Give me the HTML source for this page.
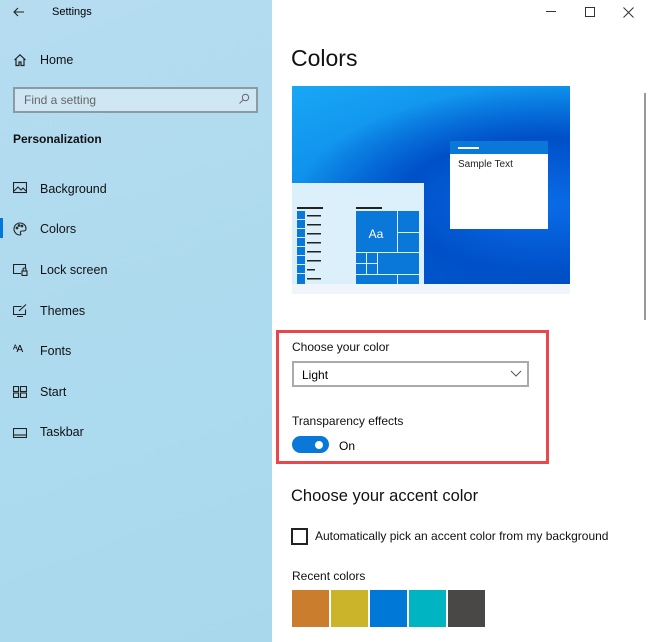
<!DOCTYPE html>
<html><head><style>
*{margin:0;padding:0;box-sizing:border-box}
body{width:648px;height:642px;overflow:hidden;font-family:"Liberation Sans",sans-serif;background:#fff;position:relative;color:#000}
.a{position:absolute}
#side{left:0;top:0;width:272px;height:642px;background:linear-gradient(160deg,#b6dcf0,#acdaee 60%,#a9d8ec)}
.nav{position:absolute;left:40px;font-size:12.5px;color:#111}
.ic{position:absolute;left:13px}
.sw{position:absolute;top:590px;width:37px;height:37px}
</style></head><body>
<div id="side" class="a">
 <svg class="a" style="left:13px;top:7px" width="12" height="10" viewBox="0 0 12 10" fill="none" stroke="#222" stroke-width="1.1"><path d="M11 5H1M5 1L1 5l4 4"/></svg>
 <div class="a" style="left:52px;top:6px;font-size:11px">Settings</div>
 <svg class="ic" style="top:53px" width="14" height="14" viewBox="0 0 14 14" fill="none" stroke="#222" stroke-width="1.2"><path d="M1.5 7L7 1.8 12.5 7M3 5.8V12.5h3V9h2v3.5h3V5.8"/></svg>
 <div class="nav" style="top:53px">Home</div>
 <div class="a" style="left:13px;top:87px;width:245px;height:26px;border:2px solid #8a9ba4;background:#cfe7f3"></div>
 <div class="a" style="left:24px;top:93px;font-size:12px;color:#666">Find a setting</div>
 <svg class="a" style="left:238px;top:93px" width="12" height="12" viewBox="0 0 12 12" fill="none" stroke="#666" stroke-width="1"><circle cx="7.5" cy="4.5" r="3.2"/><path d="M5.2 6.8L1.5 10.5"/></svg>
 <div class="a" style="left:13px;top:132px;font-size:12px;font-weight:bold;color:#111">Personalization</div>
 <svg class="ic" style="top:182px" width="14" height="12" viewBox="0 0 14 12" fill="none" stroke="#222" stroke-width="1.1"><rect x="0.5" y="0.5" width="13" height="10"/><path d="M1 9l4-4 3 3 2-2 3 3"/></svg>
 <div class="nav" style="top:182px">Background</div>
 <div class="a" style="left:0;top:218px;width:3px;height:20px;background:#0078d7"></div>
 <svg class="ic" style="top:222px" width="14" height="14" viewBox="0 0 14 14" fill="none" stroke="#222" stroke-width="1.1"><path d="M7 1a6 6 0 1 0 0 12c1 0 1-1 .5-2s0-2 1.5-2h2a2.5 2.5 0 0 0 2-2.5C13 3.5 10.5 1 7 1z"/><circle cx="4" cy="6" r=".8"/><circle cx="6" cy="3.5" r=".8"/><circle cx="9" cy="4" r=".8"/></svg>
 <div class="nav" style="top:222px">Colors</div>
 <svg class="ic" style="top:264px" width="15" height="12" viewBox="0 0 15 12" fill="none" stroke="#222" stroke-width="1.1"><path d="M8 9.5H.5V.5h12v4"/><rect x="9" y="7" width="5" height="4.5"/><path d="M10 7V5.5a1.5 1.5 0 0 1 3 0V7"/></svg>
 <div class="nav" style="top:263px">Lock screen</div>
 <svg class="ic" style="top:304px" width="15" height="13" viewBox="0 0 15 13" fill="none" stroke="#222" stroke-width="1.1"><path d="M.5 2.5h8M.5 2.5v8h12v-5M4 12.5h6M6 7l7-6.5"/></svg>
 <div class="nav" style="top:304px">Themes</div>
 <div class="a" style="left:13px;top:344px;font-size:10px;letter-spacing:-1px">ᴬA</div>
 <div class="nav" style="top:344px">Fonts</div>
 <svg class="ic" style="top:386px" width="14" height="12" viewBox="0 0 14 12" fill="none" stroke="#222" stroke-width="1.1"><rect x=".5" y=".5" width="5" height="5"/><rect x="7.5" y=".5" width="6" height="5"/><rect x=".5" y="7" width="5" height="4.5"/><rect x="7.5" y="7" width="6" height="4.5"/></svg>
 <div class="nav" style="top:385px">Start</div>
 <svg class="ic" style="top:428px" width="14" height="10" viewBox="0 0 14 10" fill="none" stroke="#222" stroke-width="1.1"><rect x=".5" y=".5" width="13" height="9"/><path d="M.5 7h13"/></svg>
 <div class="nav" style="top:425px">Taskbar</div>
</div>
<div class="a" style="left:546px;top:11px;width:10px;height:1px;background:#333"></div>
<div class="a" style="left:585px;top:7px;width:10px;height:10px;border:1px solid #333"></div>
<svg class="a" style="left:623px;top:7px" width="11" height="11" fill="none" stroke="#333" stroke-width="1"><path d="M.5.5l10 10M10.5.5l-10 10"/></svg>
<div class="a" style="left:291px;top:45px;font-size:23px;color:#111">Colors</div>
<div class="a" style="left:292px;top:86px;width:278px;height:198px;background:radial-gradient(ellipse at 90% 60%,#0a6ce8,#0050c8 40%,transparent 70%),linear-gradient(160deg,#19a7f5,#0a88e8 45%,#0060d0 75%,#0044b8)"></div>
<div class="a" style="left:292px;top:284px;width:278px;height:10px;background:#eff5fb"></div>
<div class="a" style="left:450px;top:141px;width:98px;height:13px;background:#0a78d8"></div>
<div class="a" style="left:458px;top:147px;width:21px;height:2px;background:#fff"></div>
<div class="a" style="left:450px;top:154px;width:98px;height:75px;background:#fff"></div>
<div class="a" style="left:458px;top:159px;font-size:10px;color:#222">Sample Text</div>
<div class="a" style="left:292px;top:183px;width:132px;height:101px;background:#dcf0fb"></div>
<div class="a" style="left:297px;top:207px;width:26px;height:2px;background:#222"></div>
<div class="a" style="left:356px;top:207px;width:26px;height:2px;background:#222"></div>
<svg class="a" style="left:297px;top:211px" width="30" height="73">
<g fill="#0a78d8"><rect x="0" y="0" width="8" height="8"/><rect x="0" y="9" width="8" height="8"/><rect x="0" y="18" width="8" height="8"/><rect x="0" y="27" width="8" height="8"/><rect x="0" y="36" width="8" height="8"/><rect x="0" y="45" width="8" height="8"/><rect x="0" y="54" width="8" height="8"/><rect x="0" y="63" width="8" height="10"/></g>
<g fill="#222"><rect x="10" y="4" width="14" height="1.5"/><rect x="10" y="13" width="14" height="1.5"/><rect x="10" y="22" width="14" height="1.5"/><rect x="10" y="31" width="14" height="1.5"/><rect x="10" y="40" width="14" height="1.5"/><rect x="10" y="49" width="14" height="1.5"/><rect x="10" y="58" width="8" height="1.5"/><rect x="10" y="67" width="14" height="1.5"/></g></svg>
<svg class="a" style="left:356px;top:211px" width="63" height="73"><g fill="#0a78d8">
<rect x="0" y="0" width="41" height="41"/><rect x="42" y="0" width="21" height="21"/><rect x="42" y="22" width="21" height="19"/>
<rect x="0" y="42" width="10" height="10"/><rect x="11" y="42" width="10" height="10"/><rect x="0" y="53" width="10" height="10"/><rect x="11" y="53" width="10" height="10"/><rect x="22" y="42" width="41" height="21"/>
<rect x="0" y="64" width="41" height="9"/><rect x="42" y="64" width="21" height="9"/></g>
<text x="20" y="27" font-size="12" fill="#fff" text-anchor="middle" font-family="Liberation Sans">Aa</text></svg>
<div class="a" style="left:644px;top:93px;width:2px;height:227px;background:#999"></div>
<div class="a" style="left:276px;top:330px;width:273px;height:134px;border:3px solid #e8474b"></div>
<div class="a" style="left:292px;top:340px;font-size:12px;color:#111">Choose your color</div>
<div class="a" style="left:292px;top:361px;width:237px;height:26px;border:2px solid #aaa;background:#fff"></div>
<div class="a" style="left:302px;top:368px;font-size:12px">Light</div>
<svg class="a" style="left:510px;top:370px" width="12" height="7" fill="none" stroke="#555"><path d="M1 1l5 5 5-5"/></svg>
<div class="a" style="left:292px;top:414px;font-size:12px;color:#111">Transparency effects</div>
<div class="a" style="left:292px;top:436px;width:37px;height:17px;border-radius:9px;background:#0a78d8"></div>
<div class="a" style="left:315px;top:441px;width:8px;height:8px;border-radius:50%;background:#fff"></div>
<div class="a" style="left:339px;top:439px;font-size:12px">On</div>
<div class="a" style="left:291px;top:487px;font-size:16.5px;color:#111">Choose your accent color</div>
<div class="a" style="left:291px;top:528px;width:17px;height:17px;border:2px solid #222"></div>
<div class="a" style="left:315px;top:529px;font-size:12px;color:#111">Automatically pick an accent color from my background</div>
<div class="a" style="left:292px;top:569px;font-size:12px;color:#111">Recent colors</div>
<div class="sw" style="left:292px;background:#ca7d2c"></div>
<div class="sw" style="left:331px;background:#cbb42a"></div>
<div class="sw" style="left:370px;background:#0078d7"></div>
<div class="sw" style="left:409px;background:#00b4c2"></div>
<div class="sw" style="left:448px;background:#4a4846"></div>
</body></html>
